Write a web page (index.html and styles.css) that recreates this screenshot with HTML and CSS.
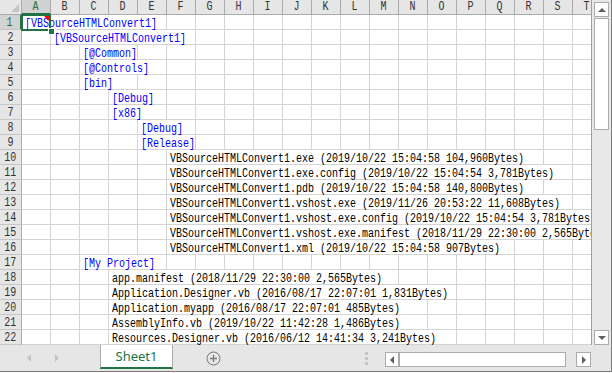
FILE: index.html
```html
<!DOCTYPE html>
<html>
<head>
    <meta charset="utf-8">
    <title>Sheet1</title>
    <link rel="stylesheet" href="styles.css">
</head>
<body>
<div class="window">
    <div class="main">
        <div class="sheet">
            <div class="colhead">
                <div class="corner"><span class="corner-tri"></span></div>
                <div class="letters">
                    <div class="ch sel"><span class="g">A</span></div>
                    <div class="ch"><span class="g">B</span></div>
                    <div class="ch"><span class="g">C</span></div>
                    <div class="ch"><span class="g">D</span></div>
                    <div class="ch"><span class="g">E</span></div>
                    <div class="ch"><span class="g">F</span></div>
                    <div class="ch"><span class="g">G</span></div>
                    <div class="ch"><span class="g">H</span></div>
                    <div class="ch"><span class="g">I</span></div>
                    <div class="ch"><span class="g">J</span></div>
                    <div class="ch"><span class="g">K</span></div>
                    <div class="ch"><span class="g">L</span></div>
                    <div class="ch"><span class="g">M</span></div>
                    <div class="ch"><span class="g">N</span></div>
                    <div class="ch"><span class="g">O</span></div>
                    <div class="ch"><span class="g">P</span></div>
                    <div class="ch"><span class="g">Q</span></div>
                    <div class="ch"><span class="g">R</span></div>
                    <div class="ch"><span class="g">S</span></div>
                    <div class="ch"><span class="g">T</span></div>
                </div>
            </div>

            <div class="row">
                <div class="rh sel"><span class="g">1</span></div>
                <div class="cells"><div class="t blue ca s5"><span class="g">[VBSourceHTMLConvert1]</span></div></div>
            </div>
            <div class="row">
                <div class="rh"><span class="g">2</span></div>
                <div class="cells"><div class="t blue cb s5"><span class="g">[VBSourceHTMLConvert1]</span></div></div>
            </div>
            <div class="row">
                <div class="rh"><span class="g">3</span></div>
                <div class="cells"><div class="t blue cc s2"><span class="g">[@Common]</span></div></div>
            </div>
            <div class="row">
                <div class="rh"><span class="g">4</span></div>
                <div class="cells"><div class="t blue cc s3"><span class="g">[@Controls]</span></div></div>
            </div>
            <div class="row">
                <div class="rh"><span class="g">5</span></div>
                <div class="cells"><div class="t blue cc s2"><span class="g">[bin]</span></div></div>
            </div>
            <div class="row">
                <div class="rh"><span class="g">6</span></div>
                <div class="cells"><div class="t blue cd s2"><span class="g">[Debug]</span></div></div>
            </div>
            <div class="row">
                <div class="rh"><span class="g">7</span></div>
                <div class="cells"><div class="t blue cd s2"><span class="g">[x86]</span></div></div>
            </div>
            <div class="row">
                <div class="rh"><span class="g">8</span></div>
                <div class="cells"><div class="t blue ce s2"><span class="g">[Debug]</span></div></div>
            </div>
            <div class="row">
                <div class="rh"><span class="g">9</span></div>
                <div class="cells"><div class="t blue ce s2"><span class="g">[Release]</span></div></div>
            </div>
            <div class="row">
                <div class="rh"><span class="g">10</span></div>
                <div class="cells"><div class="t cf s13"><span class="g">VBSourceHTMLConvert1.exe (2019/10/22 15:04:58 104,960Bytes)</span></div></div>
            </div>
            <div class="row">
                <div class="rh"><span class="g">11</span></div>
                <div class="cells"><div class="t cf s14"><span class="g">VBSourceHTMLConvert1.exe.config (2019/10/22 15:04:54 3,781Bytes)</span></div></div>
            </div>
            <div class="row">
                <div class="rh"><span class="g">12</span></div>
                <div class="cells"><div class="t cf s13"><span class="g">VBSourceHTMLConvert1.pdb (2019/10/22 15:04:58 140,800Bytes)</span></div></div>
            </div>
            <div class="row">
                <div class="rh"><span class="g">13</span></div>
                <div class="cells"><div class="t cf s14"><span class="g">VBSourceHTMLConvert1.vshost.exe (2019/11/26 20:53:22 11,608Bytes)</span></div></div>
            </div>
            <div class="row">
                <div class="rh"><span class="g">14</span></div>
                <div class="cells"><div class="t cf s15"><span class="g">VBSourceHTMLConvert1.vshost.exe.config (2019/10/22 15:04:54 3,781Bytes)</span></div></div>
            </div>
            <div class="row">
                <div class="rh"><span class="g">15</span></div>
                <div class="cells"><div class="t cf s15"><span class="g">VBSourceHTMLConvert1.vshost.exe.manifest (2018/11/29 22:30:00 2,565Bytes)</span></div></div>
            </div>
            <div class="row">
                <div class="rh"><span class="g">16</span></div>
                <div class="cells"><div class="t cf s12"><span class="g">VBSourceHTMLConvert1.xml (2019/10/22 15:04:58 907Bytes)</span></div></div>
            </div>
            <div class="row">
                <div class="rh"><span class="g">17</span></div>
                <div class="cells"><div class="t blue cc s3"><span class="g">[My Project]</span></div></div>
            </div>
            <div class="row">
                <div class="rh"><span class="g">18</span></div>
                <div class="cells"><div class="t cd s10"><span class="g">app.manifest (2018/11/29 22:30:00 2,565Bytes)</span></div></div>
            </div>
            <div class="row">
                <div class="rh"><span class="g">19</span></div>
                <div class="cells"><div class="t cd s12"><span class="g">Application.Designer.vb (2016/08/17 22:07:01 1,831Bytes)</span></div></div>
            </div>
            <div class="row">
                <div class="rh"><span class="g">20</span></div>
                <div class="cells"><div class="t cd s11"><span class="g">Application.myapp (2016/08/17 22:07:01 485Bytes)</span></div></div>
            </div>
            <div class="row">
                <div class="rh"><span class="g">21</span></div>
                <div class="cells"><div class="t cd s11"><span class="g">AssemblyInfo.vb (2019/10/22 11:42:28 1,486Bytes)</span></div></div>
            </div>
            <div class="row">
                <div class="rh"><span class="g">22</span></div>
                <div class="cells"><div class="t cd s12"><span class="g">Resources.Designer.vb (2016/06/12 14:41:34 3,241Bytes)</span></div></div>
            </div>

            <!-- active cell A1 -->
            <div class="cursor"></div>
            <div class="note"></div>
            <div class="handle"></div>
        </div>

        <div class="vscroll">
            <div class="sbtn"><span class="arr up"></span></div>
            <div class="vthumb"></div>
            <div class="vtrack"></div>
            <div class="sbtn"><span class="arr down"></span></div>
        </div>
    </div>

    <div class="bottom">
        <div class="tabnav">
            <span class="nav prev"></span>
            <span class="nav next"></span>
        </div>
        <div class="tab">Sheet1</div>
        <div class="add">
            <svg width="15" height="15" viewBox="0 0 15 15">
                <circle cx="7.5" cy="7.5" r="6.5" fill="none" stroke="#7a7a7a"/>
                <path d="M7.5 4v7M4 7.5h7" stroke="#7a7a7a" stroke-width="1.3"/>
            </svg>
        </div>
        <div class="split"><i></i><i></i><i></i></div>
        <div class="hscroll">
            <div class="sbtn hb"><span class="arr left"></span></div>
            <div class="hthumb"></div>
            <div class="htrack"></div>
            <div class="sbtn hb"><span class="arr right"></span></div>
        </div>
    </div>
</div>
</body>
</html>
```

FILE: styles.css
```css
* {
    box-sizing: border-box;
}

body {
    margin: 0;
    background-color: #fff;
    font-family: "Liberation Mono", monospace;
}

.window {
    width: 612px;
    height: 372px;
    display: flex;
    flex-direction: column;
    border-right: 1px solid #7a7a7a;
    border-bottom: 1px solid #7a7a7a;
    overflow: hidden;
}

.main {
    display: flex;
    height: 345px;
}

/* grid area */
.sheet {
    position: relative;
    width: 592px;
    border-right: 1px solid #9e9e9e;
    overflow: hidden;
}

.colhead,
.row {
    display: flex;
    height: 15px;
}

.corner {
    position: relative;
    width: 22px;
    flex: none;
    background-color: #e6e6e6;
    border-right: 1px solid #ababab;
    border-bottom: 1px solid #ababab;
}

.corner-tri {
    position: absolute;
    right: 2px;
    bottom: 2px;
    width: 0;
    height: 0;
    border-left: 8px solid transparent;
    border-bottom: 8px solid #c4c4c4;
}

.letters,
.cells {
    display: grid;
    grid-template-columns: repeat(20, 29px);
    flex: none;
    width: 580px;
}

.ch {
    height: 15px;
    background-color: #e6e6e6;
    border-right: 1px solid #ababab;
    border-bottom: 1px solid #ababab;
    color: #333;
    font-size: 12px;
    line-height: 14px;
    text-align: center;
}

.rh {
    width: 22px;
    flex: none;
    background-color: #e6e6e6;
    border-right: 1px solid #ababab;
    border-bottom: 1px solid #c6c6c6;
    color: #333;
    font-size: 12px;
    line-height: 14px;
    text-align: center;
    padding-top: 1px;
}

.ch.sel {
    background-color: #d2d2d2;
    color: #217346;
    border-bottom: 2px solid #217346;
}

.rh.sel {
    background-color: #d2d2d2;
    color: #217346;
    border-right: 2px solid #217346;
}

.cells {
    grid-template-rows: 14px;
    height: 15px;
    background: repeating-linear-gradient(to right, #fff 0 28px, #d4d4d4 28px 29px);
    border-bottom: 1px solid #d4d4d4;
}

/* cell text, MS Gothic style narrow mono */
.g {
    display: inline-block;
    transform: scaleX(0.8333);
    transform-origin: 50% 50%;
}

.t {
    height: 14px;
    margin-right: 1px;
    padding: 2px 0 0 3px;
    background-color: #fff;
    color: #000;
    font-size: 12px;
    line-height: 14px;
    white-space: nowrap;
}

.t .g {
    transform-origin: 0 0;
}

.blue {
    color: #0000ff;
}

.ca { grid-column-start: 1; }
.cb { grid-column-start: 2; }
.cc { grid-column-start: 3; }
.cd { grid-column-start: 4; }
.ce { grid-column-start: 5; }
.cf { grid-column-start: 6; }

.s2 { grid-column-end: span 2; }
.s3 { grid-column-end: span 3; }
.s5 { grid-column-end: span 5; }
.s10 { grid-column-end: span 10; }
.s11 { grid-column-end: span 11; }
.s12 { grid-column-end: span 12; }
.s13 { grid-column-end: span 13; }
.s14 { grid-column-end: span 14; }
.s15 { grid-column-end: span 15; }

.cursor {
    position: absolute;
    left: 21px;
    top: 14px;
    width: 30px;
    height: 17px;
    border: 2px solid #217346;
}

.note {
    position: absolute;
    left: 44px;
    top: 16px;
    width: 0;
    height: 0;
    border-left: 5px solid transparent;
    border-top: 5px solid #ff0000;
}

.handle {
    position: absolute;
    left: 48px;
    top: 28px;
    width: 7px;
    height: 7px;
    background-color: #217346;
    border: 1px solid #fff;
}

/* scroll bars */
.vscroll {
    width: 19px;
    display: flex;
    flex-direction: column;
    padding: 2px 2px 0 2px;
    background-color: #e8e8e8;
}

.sbtn {
    height: 15px;
    display: flex;
    align-items: center;
    justify-content: center;
    background-color: #fff;
    border: 1px solid #ababab;
}

.vthumb {
    height: 112px;
    margin-top: 1px;
    background-color: #fff;
    border: 1px solid #ababab;
}

.vtrack {
    flex: 1;
}

.arr {
    width: 0;
    height: 0;
}

.arr.up {
    border-left: 4px solid transparent;
    border-right: 4px solid transparent;
    border-bottom: 4px solid #606060;
}

.arr.down {
    border-left: 4px solid transparent;
    border-right: 4px solid transparent;
    border-top: 4px solid #606060;
}

.arr.left {
    border-top: 4px solid transparent;
    border-bottom: 4px solid transparent;
    border-right: 4px solid #606060;
}

.arr.right {
    border-top: 4px solid transparent;
    border-bottom: 4px solid transparent;
    border-left: 4px solid #606060;
}

/* sheet tabs */
.bottom {
    display: flex;
    height: 26px;
    background-color: #e6e6e6;
}

.tabnav {
    width: 100px;
    display: flex;
    align-items: center;
}

.nav {
    width: 0;
    height: 0;
    border-top: 4px solid transparent;
    border-bottom: 4px solid transparent;
}

.nav.prev {
    margin-left: 27px;
    border-right: 4px solid #c2c2c2;
}

.nav.next {
    margin-left: 24px;
    border-left: 4px solid #c2c2c2;
}

.tab {
    width: 73px;
    height: 24px;
    background-color: #fff;
    border-left: 1px solid #ababab;
    border-right: 1px solid #ababab;
    border-bottom: 2px solid #217346;
    color: #217346;
    font-family: "Noto Sans", sans-serif;
    font-size: 13px;
    line-height: 22px;
    text-align: center;
}

.add {
    width: 80px;
    display: flex;
    align-items: center;
    justify-content: center;
}

.add svg {
    display: block;
}

.split {
    margin-left: auto;
    margin-right: 17px;
    width: 3px;
    display: flex;
    flex-direction: column;
    justify-content: center;
    gap: 2px;
}

.split i {
    display: block;
    width: 3px;
    height: 3px;
    background-color: #c4c4c4;
}

.hscroll {
    display: flex;
    width: 206px;
    height: 15px;
    margin: 7px 20px 0 0;
}

.hb {
    width: 14px;
}

.hb:last-child {
    width: 15px;
}

.hthumb {
    flex: 1;
    background-color: #fff;
    border: 1px solid #ababab;
}

.htrack {
    width: 10px;
}
```
